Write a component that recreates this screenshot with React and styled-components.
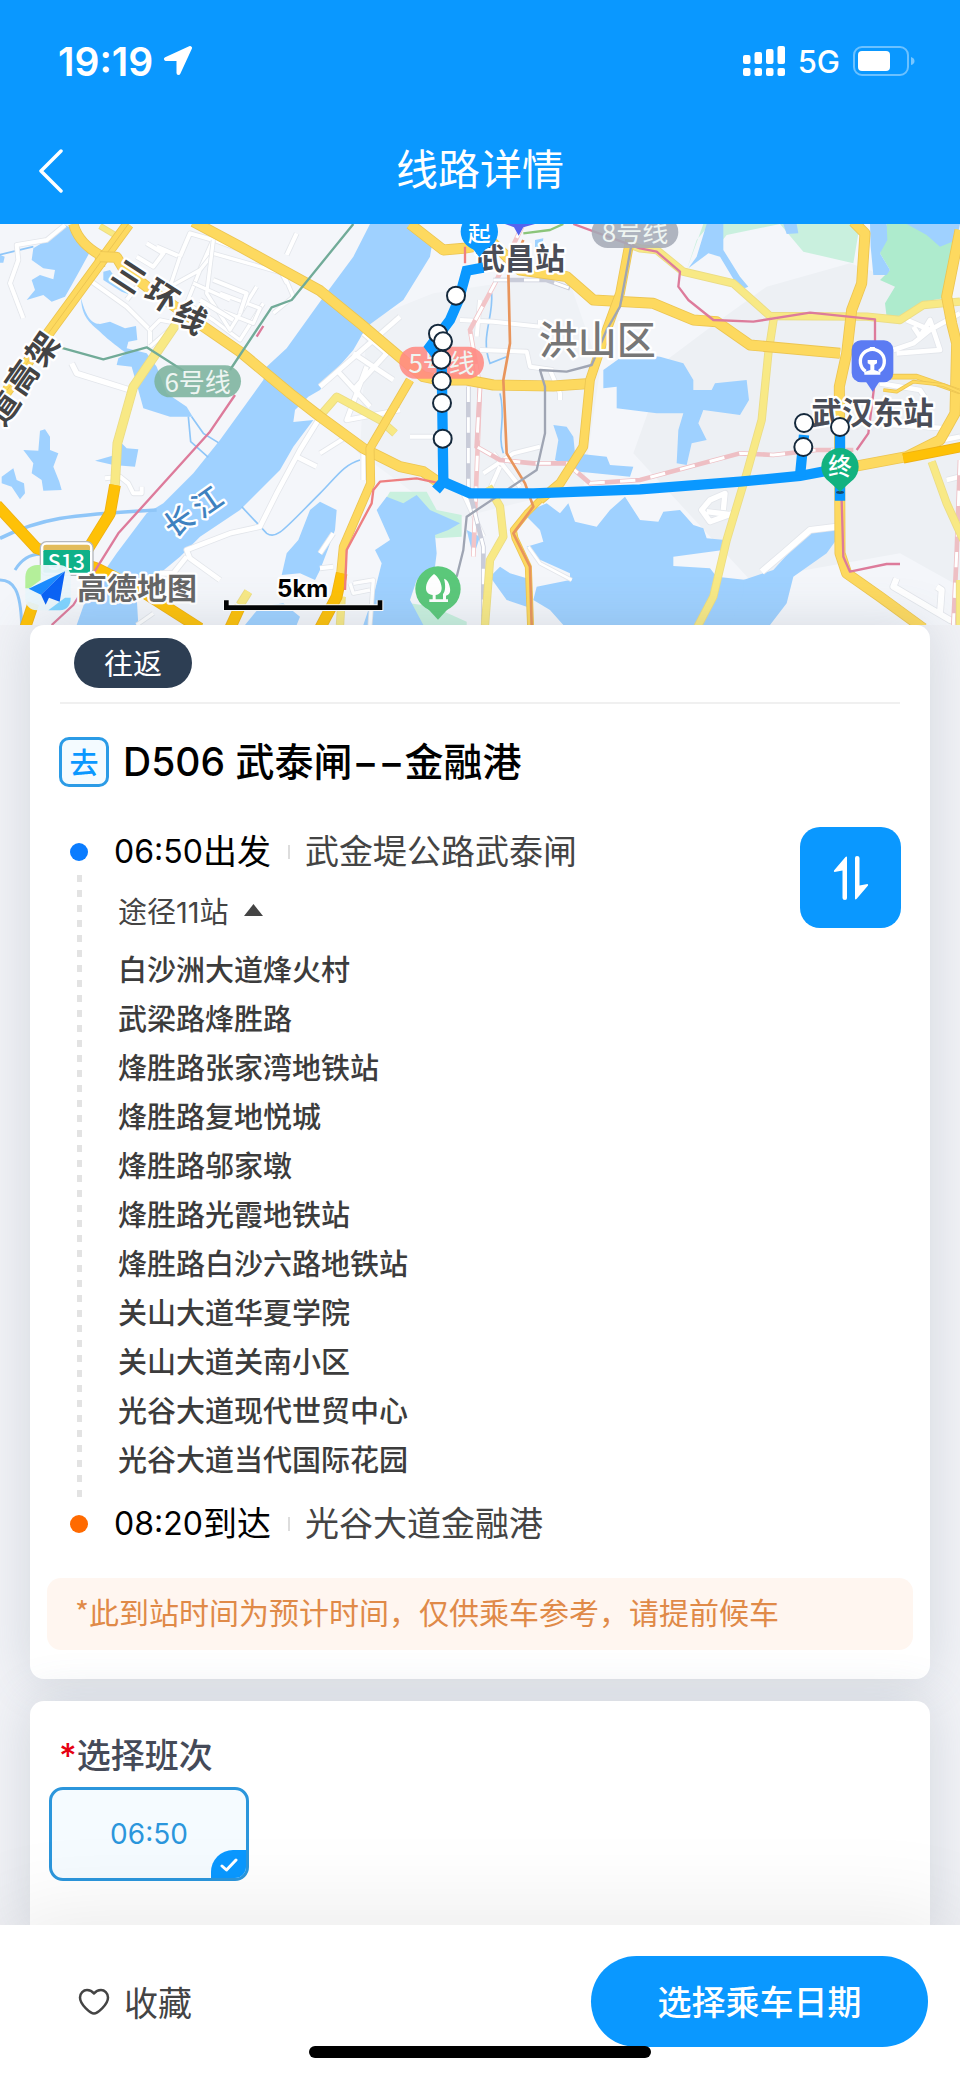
import React, { useState } from "react";
import styled, { createGlobalStyle } from "styled-components";

const BLUE = "#0a98ff";
const FONT = `Inter, "Noto Sans CJK SC", sans-serif`;
const CJK = `"Noto Sans CJK SC", sans-serif`;

const GlobalStyle = createGlobalStyle`
  * { box-sizing: border-box; }
  body { margin: 0; background: #f1f2f6; font-family: ${FONT}; color: #000; }
  button { font: inherit; border: 0; padding: 0; cursor: pointer; }
`;

const Page = styled.div`
  display: flex;
  flex-direction: column;
  min-height: 100vh;
  overflow-x: clip;
`;

const Header = styled.header`
  position: relative;
  z-index: 1;
  background: ${BLUE};
  color: #fff;
`;

const StatusBar = styled.div`
  display: flex;
  justify-content: space-between;
  align-items: center;
  height: 122px;
  padding: 0 44px 0 58px;
`;

const StatusGroup = styled.div`
  display: flex;
  align-items: center;
  gap: ${(p) => p.$gap}px;
`;

const Clock = styled.span`
  font-size: 39px;
  font-weight: 600;
`;

const Network = styled.span`
  font-size: 31px;
  font-weight: 500;
`;

const NavBar = styled.div`
  display: grid;
  grid-template-columns: 60px 1fr 60px;
  align-items: center;
  height: 102px;
  padding: 0 24px 4px;
`;

const BackButton = styled.button`
  display: flex;
  justify-content: center;
  width: 54px;
  background: none;
  color: inherit;
`;

const NavTitle = styled.h1`
  margin: 0;
  padding-bottom: 2px;
  text-align: center;
  font-size: 42px;
  line-height: 60px;
  font-weight: 400;
`;

const MapArea = styled.section`
  height: 401px;
  overflow: hidden;
  background: #f4f6fa;
  svg { display: block; width: 100%; height: 100%; }
`;

const Main = styled.main`
  flex: 1;
  display: flex;
  flex-direction: column;
  gap: 22px;
  padding: 0 30px;
`;

const Card = styled.section`
  padding: ${(p) => p.$pad};
  background: #fff;
  border-radius: ${(p) => (p.$open ? "14px 14px 0 0" : "14px")};
  box-shadow: 0 0 50px rgba(90, 110, 130, 0.2);
  flex: ${(p) => (p.$open ? 1 : "none")};
`;

const TagRow = styled.div`
  margin: 0 13px;
  padding: 0 14px 14px;
  border-bottom: 2px solid #f0f0f0;
`;

const Tag = styled.span`
  display: inline-flex;
  align-items: center;
  justify-content: center;
  width: 118px;
  height: 50px;
  padding-bottom: 2px;
  border-radius: 25px;
  background: #2d3e53;
  color: #fff;
  font-size: 29px;
  vertical-align: top;
`;

const LineHeading = styled.div`
  display: flex;
  align-items: center;
  gap: 14px;
  margin: 33px 12px 40px;
`;

const DirectionBadge = styled.span`
  display: flex;
  align-items: center;
  justify-content: center;
  width: 50px;
  height: 50px;
  padding-bottom: 2px;
  border: 3px solid #2b9be6;
  border-radius: 10px;
  background: #f4fbff;
  color: ${BLUE};
  font-size: 29px;
  font-weight: 500;
`;

const LineName = styled.h2`
  margin: 0;
  font-size: 39px;
  line-height: 50px;
  font-weight: 500;
`;

const Route = styled.div`
  display: flex;
  align-items: flex-start;
  padding: 0 12px 0 23px;
  margin-bottom: 29px;
`;

const Rail = styled.div`
  align-self: stretch;
  display: flex;
  flex-direction: column;
  align-items: center;
  gap: 14px;
  width: 18px;
  margin-right: 26px;
  padding: 16px 0;
`;

const Dot = styled.span`
  width: 18px;
  height: 18px;
  border-radius: 50%;
  background: ${(p) => p.$color};
`;

const Dashes = styled.span`
  flex: 1;
  width: 5px;
  background: repeating-linear-gradient(#e3e3e3 0 7px, transparent 7px 15px);
`;

const Stops = styled.div`
  flex: 1;
`;

const Terminal = styled.div`
  display: flex;
  align-items: center;
  height: 50px;
  font-size: 34px;
  line-height: 50px;
`;

const Time = styled.time`
  font-size: 32px;
`;

const Place = styled.span`
  display: flex;
  align-items: center;
  color: #444;
  &::before {
    content: "";
    width: 2px;
    height: 14px;
    margin: 0 15px 0 17px;
    background: #ddd;
  }
`;

const ViaToggle = styled.button`
  display: flex;
  align-items: center;
  gap: 15px;
  height: 69px;
  padding: 0 0 4px 4px;
  background: none;
  color: #444;
  font-size: 29px;
`;

const StopList = styled.ol`
  list-style: none;
  margin: 0 0 14px;
  padding: 0 0 0 4px;
`;

const Stop = styled.li`
  color: #3c3c3c;
  font-size: 29px;
  line-height: 49px;
  font-weight: 500;
`;

const SwapButton = styled.button`
  display: flex;
  align-items: center;
  justify-content: center;
  width: 101px;
  height: 101px;
  border-radius: 20px;
  background: ${BLUE};
`;

const Notice = styled.p`
  margin: 0;
  padding: 0 28px 6px;
  border-radius: 14px;
  background: #fff6f0;
  color: #e08a48;
  font-family: ${CJK};
  font-size: 30px;
  line-height: 66px;
`;

const SectionTitle = styled.h3`
  margin: 0 0 11px 10px;
  color: #454a58;
  font-size: 34px;
  line-height: 40px;
  font-weight: 500;
`;

const Required = styled.span`
  color: #e60012;
`;

const Option = styled.button`
  position: relative;
  width: 200px;
  height: 94px;
  border: 3px solid #2b96dc;
  border-radius: 14px;
  background: #f5fbff;
  color: #2b96dc;
  font-size: 28px;
  overflow: hidden;
`;

const Check = styled.span`
  position: absolute;
  right: -1px;
  bottom: -1px;
  display: flex;
  align-items: center;
  justify-content: center;
  width: 36px;
  height: 29px;
  border-radius: 22px 0 0 0;
  background: ${BLUE};
`;

const Footer = styled.footer`
  position: sticky;
  bottom: 0;
  display: flex;
  justify-content: space-between;
  align-items: flex-start;
  height: 153px;
  padding: 31px 32px 0 78px;
  background: #fff;
  box-shadow: 0 0 100px rgba(0, 0, 0, 0.1);
`;

const FavButton = styled.button`
  display: flex;
  align-items: center;
  gap: 14px;
  height: 91px;
  background: none;
  color: #444;
  font-size: 34px;
`;

const PrimaryButton = styled.button`
  width: 337px;
  height: 91px;
  padding-bottom: 3px;
  border-radius: 46px;
  background: ${BLUE};
  color: #fff;
  font-size: 34px;
  font-weight: 500;
`;

const HomeIndicator = styled.span`
  position: absolute;
  left: 50%;
  bottom: 20px;
  width: 342px;
  height: 12px;
  margin-left: -171px;
  border-radius: 6px;
  background: #000;
`;

/* ---------- map drawing ---------- */

const Road = ({ d, w = 28, fill = "#fdd95f", edge = "#ecc552" }) => (
  <g fill="none" strokeLinejoin="round">
    <path d={d} stroke={edge} strokeWidth={w + 5} />
    <path d={d} stroke={fill} strokeWidth={w} />
  </g>
);
const Pale = ({ d, w = 20 }) => <Road d={d} w={w} fill="#f8e985" edge="#ebdc85" />;
const Highway = ({ d, w = 30 }) => <Road d={d} w={w} fill="#fec107" edge="#eeb013" />;
const Street = ({ d, w = 12 }) => <Road d={d} w={w} fill="#fff" edge="#e3e6eb" />;
const Metro = ({ d, color, w = 7 }) => <path d={d} fill="none" stroke={color} strokeWidth={w} strokeLinejoin="round" />;
const Railway = ({ d, color, w = 14 }) => (
  <g fill="none">
    <path d={d} stroke={color} strokeWidth={w} />
    <path d={d} stroke="#fff" strokeWidth={w - 5} strokeDasharray="46 46" />
  </g>
);

const Label = styled.text`
  font-family: ${CJK};
  font-weight: ${(p) => p.$weight || 500};
  font-size: ${(p) => p.$size}px;
  fill: ${(p) => p.$fill || "#444"};
  stroke: ${(p) => p.$halo || "#fff"};
  stroke-width: ${(p) => (p.$halo === "none" ? 0 : 14)}px;
  stroke-linejoin: round;
  paint-order: stroke;
  text-anchor: middle;
  dominant-baseline: central;
`;

const WATER = [
  "M190 12L240 40L270 95L240 150L215 195L195 230L155 245L130 225L80 240L105 210L95 180L120 165L160 178L165 150L130 145L95 120L100 85L150 55Z",
  "M0 104L14 110L10 128H0Z",
  "M310 155L330 150L350 180L400 215L400 228L365 215L310 180Z",
  "M243 235C260 300 280 312 300 312L330 305L375 325L408 318L412 360L385 365L380 385L440 400L470 440L500 520L560 560L578 590L510 590L430 565L415 510L395 440L350 435L355 415L380 400C340 370 320 355 300 335C270 310 245 290 243 235Z",
  "M1110 12H1230L1295 80L1290 110L1210 240L1100 320L1060 390L990 470L960 510L925 530L885 570L880 606L940 600L880 680L840 750L720 870L600 950L540 1010L480 1060L410 1130L415 1215H230L260 1130L350 1000L440 880L490 850L580 760L660 660L790 480L800 440L860 385L960 245L1060 110Z",
  "M960 845L1010 870L1005 930L985 985L960 1050L945 1080L900 1060L845 1065L860 1000L895 960L930 870Z",
  "M735 1215L780 1160L850 1150L900 1190L890 1215Z",
  "M120 632L135 628L150 650L150 690L175 700L160 740L178 785L185 810L130 812L125 780L95 760L100 730L70 690L115 692Z",
  "M5 770L40 745L50 780L72 790L75 820L60 838L35 800L5 790Z",
  "M365 670L380 685L415 688L405 740L340 735L285 722L345 705Z",
  "M960 500L990 430L975 490Z",
  "M1130 870L1160 830L1210 850L1250 825L1290 870L1380 910L1345 930L1305 945L1310 1000L1305 1040L1250 1080L1230 1140L1270 1215H1090L1125 1110L1145 1030L1125 990L1170 960Z",
  "M1570 880L1640 850L1680 880L1705 850L1725 905L1790 920L1830 870L1875 830L1920 900L1975 905L1990 875L2040 870L2080 915L2110 925L2120 955L2175 960L2170 990L2020 1010L2020 1038L2130 1045L2150 1070L2240 1080L2250 1120L2230 1215H1690L1650 1170L1600 1140L1610 1100L1710 1080L1710 1060L1600 1010L1580 980L1630 965L1620 930Z",
  "M1500 1040L1530 1060L1580 1075L1580 1160L1520 1140L1470 1070Z",
  "M1400 930L1440 950L1420 1010Z",
  "M1810 450L1880 400L1980 410L2050 430L2080 480L2080 510L2135 510L2145 490L2240 480L2247 540L2220 585L2110 570L2095 610L2120 660L2075 670L2060 735L2030 730L2035 630L2050 580L1970 580L1850 565V500L1810 505Z",
  "M1660 615L1700 620L1720 650L1725 700L1820 710L1830 735L1900 740L1890 770L1740 755L1665 720L1675 660Z",
  "M2120 12H2170V90L2220 170L2245 200L2220 210L2160 110L2125 100L2065 145L2090 110Z",
  "M2530 930L2480 1000L2380 1070L2360 1150L2310 1215H2190L2230 1120L2230 1080L2320 1050L2410 950L2460 925Z",
  "M1605 60L1630 55L1625 90L1605 85Z",
];

const CIRCLES = [
  [1368, 227], [1314, 341], [1329, 364], [1324, 419], [1325, 483], [1326, 549], [1328, 656],
  [2412, 609], [2410, 681], [2520, 621],
];

const LinePill = ({ x, y, w, fill, text }) => (
  <g>
    <rect x={x} y={y} width={w} height="96" rx="48" fill={fill} opacity="0.88" />
    <Label x={x + w / 2} y={y + 44} $size={78} $fill="#eef5f2" $halo="none" $weight={400}>{text}</Label>
  </g>
);

const TransitMap = () => (
  <svg viewBox="0 12 2880 1203" preserveAspectRatio="xMidYMid slice" role="img" aria-label="线路地图">
    <rect y="0" width="2880" height="1220" fill="#f4f6fa" />
    <path d="M2000 420L2160 300L2300 200L2550 130L2880 250V1100L2700 1000L2250 1080L1900 700Z" fill="#edf0f4" />
    <path d="M1100 300L1300 220L1700 160L1800 450L1750 800L1350 900L1080 700Z" fill="#eff2f6" />
    {/* parks */}
    <g fill="#c9f0de">
      <path d="M2170 12H2340L2410 95L2560 130L2580 12Z M2340 12L2180 45L2160 70V12Z" />
      <path d="M2090 60L2130 12H2110L2060 150Z" />
      <path d="M1140 865L1170 815H1280L1310 870L1385 885V950L1310 955Z" />
      <path d="M1230 1150L1300 1160L1400 1205V1215H1260Z" />
    </g>
    <path d="M2660 12H2870V60L2830 235L2770 245L2720 285L2660 292L2655 250L2685 200L2640 180L2670 150L2640 100Z" fill="#aeebcd" />
    <g fill="#9fd1ff">
      {WATER.map((d) => <path key={d} d={d} />)}
      <path d="M2610 12H2660L2662 60L2640 100L2670 150L2660 165L2620 165L2612 80Z" />
      <path d="M2720 12H2880L2870 60L2820 80L2780 45Z" />
      <path d="M2350 12H2390L2395 40L2360 42Z" />
    </g>
    <g fill="none" stroke="#8fc6f8" strokeWidth="5">
      <path d="M0 955C120 895 200 885 470 870" strokeWidth="11" />
      <path d="M45 1050C70 1010 100 1003 120 1003M0 1080C40 1080 62 1110 65 1215" strokeWidth="9" />
      <path d="M725 860L800 940C830 960 850 930 960 820C1010 770 1030 735 1080 720" />
      <path d="M565 590L572 665L625 712M575 590L610 640L655 668M0 104L100 80" />
      <path d="M1475 220C1480 300 1440 350 1470 430L1520 410M1500 520C1520 600 1490 640 1510 700" />
    </g>
    {/* minor streets */}
    <Street d="M195 15L140 60L50 75L55 120L30 190L70 295" />
    <Street d="M215 430L230 460L390 510" w={16} />
    <Street d="M315 775L360 770L385 790L400 820L425 820L425 800" />
    <Street d="M275 185L380 260L450 330L450 380M380 240L420 190M470 80L540 110L570 40L640 60L600 150M440 70L490 100L460 140L410 110" />
    <Street d="M540 110L510 200L600 150L640 100L850 160L880 230L820 280M640 60L830 130L860 190M600 150L560 250L640 300L720 360L790 250" w={10} />
    <Street d="M660 220L780 265L760 310L670 275M640 60L620 220L690 330L770 200M580 190L690 240M450 380L530 310L480 300L450 330" w={10} />
    <Street d="M890 40L860 105M640 180L740 220L720 280M600 240L700 300" w={12} />
    <Street d="M955 600L900 690L830 820L780 920L690 940L560 990L570 1015L660 1080M560 1010L520 1060L480 1060M890 710L950 740" w={14} />
    <Street d="M1200 290L960 500M1090 340L1160 400L1060 510M1010 450L1110 560M1060 400L1180 480M1100 440L1040 600L1200 570" w={14} />
    <Street d="M960 700L1040 650L1090 700V780M1230 650H1330L1330 600M1000 1040L960 1045M1000 940L960 1000" w={12} />
    <Street d="M1060 1090L1120 1080L1110 1215M1050 1090L1060 1120L1110 1110M1040 1160H1110M460 1180L410 1215" w={10} />
    <Street d="M1380 300L1480 305L1620 320M1440 390L1580 395L1590 440L1660 450M1440 240L1430 350M1650 450L1680 520V540M1620 320V300" />
    <Street d="M1450 760L1540 700L1620 680M1480 700L1560 800M1500 740L1460 830M1390 820L1450 950" w={12} />
    <Street d="M1585 980L1620 1030L1715 1080" w={8} />
    <Street d="M2120 875L2200 885M2170 870L2175 820L2130 840L2105 870L2130 905L2200 880" w={16} />
    <Street d="M2510 920L2430 930L2350 1000L2285 1055" w={18} />
    <Street d="M2690 1075L2680 1100L2850 1200L2880 1210M2810 1100L2825 1110L2820 1180" w={18} />
    <Street d="M2680 390L2740 370L2790 330L2720 300M2690 400L2820 390L2790 300L2760 350L2740 320M2880 280L2790 330" w={14} />
    <Street d="M2600 610L2840 625M2640 490L2760 510L2780 540M2830 660L2880 650M2840 780L2880 770" w={14} />

    {/* railways */}
    <Railway d="M1570 12L1490 180L1410 330L1440 500L1420 1010" color="#f2c4c7" />
    <Railway d="M1405 500V800L1450 980V1215" color="#c9ccd9" />
    <Railway d="M1440 500L1430 680L1500 720L1600 730L1700 730L1770 790L1920 780L2220 700L2320 705L2450 690L2560 690" color="#eebfc4" />
    <Railway d="M2880 720L2870 1000L2860 1215" color="#eebfc4" />
    <Railway d="M1480 180L1640 180L1710 205" color="#c9ccd9" />

    {/* secondary roads */}
    <Pale d="M300 18L345 45" w={14} />
    <Pale d="M965 582L1010 530L1140 600L1185 640" />
    <Pale d="M1465 800L1500 860L1510 950L1470 1020L1455 1215" w={20} />
    <Pale d="M1880 70L1920 85L1970 90L2050 155L2200 190L2310 288L2600 290L2700 300L2770 255L2880 245" />
    <Pale d="M2322 290L2305 400L2285 600L2240 760L2180 960L2140 1130L2090 1225" />
    <Pale d="M2795 725L2840 850L2890 960" />
    <Pale d="M720 1155L745 1115" w={22} />
    <Pale d="M1020 1215L1025 1130" w={20} />
    <Pale d="M2880 1080V1215" w={20} />

    {/* main roads */}
    <Road d="M220 12C230 50 255 80 300 105L300 140" w={26} />
    <Road d="M385 12L145 340L-20 570" w={30} />
    <path d="M385 12L145 340L0 540" stroke="#ecc552" strokeWidth="3" fill="none" />
    <Road d="M580 5L720 80L960 212L1080 310L1210 420L1270 470L1320 480L1400 480L1480 495L1660 498L1780 490" />
    <Road d="M300 110L350 112L370 145L440 200L560 285L720 395L870 520L960 590L1090 685L1200 740L1270 755L1320 790" />
    <Road d="M1230 480L1110 685L1112 790L1030 980L1020 1080" w={22} />
    <Road d="M1230 12L1330 90L1390 85L1480 70L1560 150L1700 170L1780 240L1960 250L2080 300L2150 305L2250 375L2520 400" />
    <Road d="M1890 60L1860 220L1820 330L1770 480L1762 560L1750 680L1680 790L1620 840" w={24} />
    <Road d="M1620 840L1580 880L1540 930L1545 955L1585 1040L1592 1225" w={16} />
    <Road d="M2560 5L2595 40L2585 190L2555 270L2540 400L2518 500L2520 1000L2540 1060L2640 1130L2770 1225" />
    <Road d="M2880 30L2840 230L2855 310L2870 370L2865 580L2820 660L2720 710L2560 740" />
    <Road d="M2670 470L2750 470L2880 515" w={12} />
    <Road d="M2650 510L2690 515L2740 485L2830 495L2890 520" w={6} />
    <Pale d="M530 310L400 500L352 670L345 795" w={24} />
    <Highway d="M345 795L330 880L262 990" />
    <Highway d="M-10 855L110 985L290 1045L420 1110L600 1225" />
    <Highway d="M100 1150L75 1225" />
    <Highway d="M1025 1060L1010 1130L960 1225" />
    <Highway d="M720 1160L690 1225" />
    <Highway d="M2710 715L2890 680" w={26} />

    {/* metro lines */}
    <Metro d="M180 382L310 418L440 382L555 455M690 450L815 262L875 240L1060 12" color="#71ab98" />
    <Metro d="M790 318L770 350M705 525L630 635L355 940L280 1060L220 1155L155 1215" color="#dd7b9b" />
    <Metro d="M1395 80V130M1320 790L1250 775L1140 785L1120 810L1115 850L1040 990L1035 1110" color="#ee7f80" />
    <Metro d="M1570 60L1525 160L1530 370L1510 480L1520 700L1575 790L1600 860L1540 940L1590 1040L1595 1215" color="#e8955c" w={8} />
    <Metro d="M1895 70L1860 260L1820 330L1775 435L1700 455L1620 450L1635 500L1635 640L1610 750L1400 890L1390 990L1370 1070" color="#9fa5b3" />
    <Metro d="M1720 12L1920 85L1970 95L2040 155L2035 200L2065 240L2140 300L2260 305L2430 278L2625 298V480L2605 640L2570 690M2525 840L2530 1010L2550 1055L2660 1032H2700" color="#dd7b9b" />
    <Metro d="M1570 40L1650 30L1690 12" color="#8bc57a" />

    <LinePill x={463} y={436} w={260} fill="#7cb39d" text="6号线" />
    <LinePill x={1198} y={380} w={254} fill="#ff8a83" text="5号线" />
    <LinePill x={1775} y={-12} w={260} fill="#a5abb6" text="8号线" />

    {/* place names */}
    <Label $size={96} $weight={700} transform="translate(392 164) rotate(33)">三</Label>
    <Label $size={96} $weight={700} transform="translate(490 222) rotate(33)">环</Label>
    <Label $size={96} $weight={700} transform="translate(575 286) rotate(33)">线</Label>
    <Label $size={96} $weight={700} transform="translate(122 383) rotate(-55)">架</Label>
    <Label $size={96} $weight={700} transform="translate(60 468) rotate(-55)">高</Label>
    <Label $size={96} $weight={700} transform="translate(4 560) rotate(-55)">道</Label>
    <Label $size={88} $fill="#3f82c0" transform="translate(533 898) rotate(-35)">长</Label>
    <Label $size={88} $fill="#3f82c0" transform="translate(618 840) rotate(-35)">江</Label>
    <Label x="1560" y="107" $size={90} $fill="#4a4d57" $weight={700}>武昌站</Label>
    <Label x="1792" y="350" $size={117} $fill="#777">洪山区</Label>
    <Label x="2618" y="571" $size={92} $fill="#4a4d57" $weight={700}>武汉东站</Label>

    {/* bus route */}
    <g fill="none" stroke={BLUE} strokeWidth="31">
      <path d="M1450 143L1400 152L1376 240L1350 300L1290 380L1325 425L1330 785L1308 810" />
      <path d="M1330 785L1410 820L1600 820L1920 808L2220 785L2400 768L2520 745" />
      <path d="M2520 640V842M2400 768L2412 645" />
    </g>
    <ellipse cx="2520" cy="817" rx="12" ry="5" fill="#134a6d" />
    <g fill="#fff" stroke="#15293c" strokeWidth="6">
      {CIRCLES.map(([x, y]) => <circle key={`${x}-${y}`} cx={x} cy={y} r="27" />)}
    </g>
    <path d="M1410 75L1438 112L1466 75Z" fill={BLUE} />
    <circle cx="1438" cy="35" r="56" fill={BLUE} />
    <Label x="1438" y="33" $size={68} $fill="#fff" $halo="none">起</Label>
    <path d="M2488 785L2520 815L2552 785Z" fill="#12b27f" />
    <circle cx="2520" cy="740" r="56" fill="#12b27f" />
    <Label x="2520" y="735" $size={70} $fill="#fff" $halo="none">终</Label>

    {/* stations and points of interest */}
    <path d="M1515 12H1605L1570 22L1556 47L1542 22Z" fill="#5563ee" />
    <path d="M2598 485L2618 515L2638 485Z" fill="#5b7bf3" />
    <rect x="2555" y="361" width="125" height="126" rx="28" fill="#5b7bf3" />
    <path d="M2597 454A36 36 0 1 1 2637 454" fill="none" stroke="#fff" strokeWidth="10" />
    <path d="M2610 381H2624L2629 393H2605ZM2603 420H2631V430L2623 434V450L2641 456V464H2593V456L2611 450V434L2603 430Z" fill="#fff" />
    <path d="M1278 1160L1314 1199L1350 1160Z" fill="#5bc87a" />
    <circle cx="1314" cy="1107" r="68" fill="#5bc87a" />
    <g fill="#fff">
      <path d="M1302 1062C1285 1075 1278 1092 1278 1105C1278 1117 1286 1124 1298 1125V1138H1288V1146H1344V1138H1338V1127C1348 1125 1352 1117 1350 1105C1348 1089 1341 1078 1332 1076C1337 1095 1337 1112 1329 1122V1138H1307V1125C1319 1123 1325 1115 1325 1103C1324 1088 1316 1072 1302 1062Z" />
    </g>
    <g>
      <rect x="121" y="965" width="158" height="101" rx="18" fill="#fff" stroke="#b5b8bd" strokeWidth="4" />
      <path d="M130 990V980Q130 974 138 974H262Q270 974 270 980V990Z" fill="#e2bc5b" />
      <rect x="130" y="990" width="140" height="68" rx="4" fill="#0fb189" />
      <Label x="199" y="1022" $size={64} $fill="#fff" $halo="none">S13</Label>
    </g>
    <g>
      <rect x="76" y="1035" width="136" height="136" rx="34" fill="#e9f5fb" opacity="0.95" />
      <path d="M76 1105V1070Q78 1037 112 1035H122V1080L88 1105Z" fill="#b4ef9a" />
      <path d="M145 1171L195 1133H212Q212 1168 180 1171Z" fill="#7fd4ff" />
      <path d="M195 1054L86 1106L123 1124Z" fill="#1c8cff" />
      <path d="M195 1054L123 1124L137 1154L147 1133L179 1145Z" fill="#0a63f5" />
      <Label x="411" y="1099" $size={90} $fill="#666" $weight={700}>高德地图</Label>
    </g>
    <Label x="908" y="1106" $size={72} $fill="#000" $weight={700} style={{ fontFamily: "Inter" }}>5km</Label>
    <path d="M679 1141V1163H1140V1141" fill="none" stroke="#fff" strokeWidth="20" />
    <path d="M679 1141V1163H1140V1141" fill="none" stroke="#000" strokeWidth="14" />
  </svg>
);

/* ---------- icons ---------- */

const LocationIcon = () => (
  <svg width="30" height="30" viewBox="0 0 30 30" aria-hidden="true">
    <path d="M27 2L3 13H15.500V27Z" fill="#fff" stroke="#fff" strokeWidth="4" strokeLinejoin="round" />
  </svg>
);

const SignalIcon = () => (
  <svg width="42" height="31" viewBox="0 0 42 31" fill="#fff" aria-hidden="true">
    {[[0, 9], [11.500, 6], [23, 3], [34.500, 0]].map(([x, y]) => (
      <g key={x}>
        <rect x={x} y={y} width="7.500" height={18 - y} rx="2" />
        <rect x={x} y="22" width="7.500" height="8" rx="2" />
      </g>
    ))}
  </svg>
);

const BatteryIcon = () => (
  <svg width="63" height="31" viewBox="0 0 63 31" aria-hidden="true">
    <rect x="1" y="1" width="54" height="28" rx="8" fill="none" stroke="#fff" strokeOpacity="0.4" strokeWidth="2" />
    <rect x="5" y="5" width="32" height="20" rx="4" fill="#fff" />
    <path d="M58 11Q61.500 12 61.500 15Q61.500 18 58 19Z" fill="#fff" fillOpacity="0.45" />
  </svg>
);

const BackIcon = () => (
  <svg width="26" height="44" viewBox="0 0 26 44" aria-hidden="true">
    <path d="M23 2L3 22L23 42" fill="none" stroke="#fff" strokeWidth="3.500" strokeLinecap="round" strokeLinejoin="round" />
  </svg>
);

const SwapIcon = () => (
  <svg width="36" height="46" viewBox="0 0 36 46" fill="#fff" aria-hidden="true">
    <path d="M14 2.500V43Q14 45 12 45Q9.500 45 9.500 43V15.500L1.500 17Q0.500 16.500 1 15.500L12.500 2Q14 1 14 2.500Z" />
    <path d="M22 43.500V3Q22 1 24 1Q26.500 1 26.500 3V30.500L34.500 29Q35.500 29.500 35 30.500L23.500 44Q22 45 22 43.500Z" />
  </svg>
);

const TriangleIcon = ({ flipped }) => (
  <svg width="19" height="12" viewBox="0 0 19 12" aria-hidden="true">
    <path d={flipped ? "M0 0H19L9.500 12Z" : "M9.500 0L19 12H0Z"} fill="#444" />
  </svg>
);

const CheckIcon = () => (
  <svg width="18" height="14" viewBox="0 0 18 14" aria-hidden="true">
    <path d="M2 8L6.500 12L16 2" fill="none" stroke="#fff" strokeWidth="3" strokeLinecap="round" strokeLinejoin="round" />
  </svg>
);

const HeartIcon = ({ filled }) => (
  <svg width="32" height="28" viewBox="0 0 32 28" aria-hidden="true">
    <path
      d="M16 25.500C13 25.500 2 17 2 9.500C2 5 5.500 2 9 2C12 2 14 3 16 5.500C18 3 20 2 23 2C26.500 2 30 5 30 9.500C30 17 19 25.500 16 25.500Z"
      fill={filled ? "#444" : "none"}
      stroke="#444"
      strokeWidth="2.500"
      strokeLinejoin="round"
    />
  </svg>
);

const STOPS = [
  "白沙洲大道烽火村",
  "武梁路烽胜路",
  "烽胜路张家湾地铁站",
  "烽胜路复地悦城",
  "烽胜路邬家墩",
  "烽胜路光霞地铁站",
  "烽胜路白沙六路地铁站",
  "关山大道华夏学院",
  "关山大道关南小区",
  "光谷大道现代世贸中心",
  "光谷大道当代国际花园",
];

export default function App() {
  const [open, setOpen] = useState(true);
  const [fav, setFav] = useState(false);

  return (
    <Page>
      <GlobalStyle />
      <Header>
        <StatusBar>
          <StatusGroup $gap={10}>
            <Clock>19:19</Clock>
            <LocationIcon />
          </StatusGroup>
          <StatusGroup $gap={13}>
            <SignalIcon />
            <Network>5G</Network>
            <BatteryIcon />
          </StatusGroup>
        </StatusBar>
        <NavBar>
          <BackButton type="button" aria-label="返回"><BackIcon /></BackButton>
          <NavTitle>线路详情</NavTitle>
        </NavBar>
      </Header>

      <MapArea><TransitMap /></MapArea>

      <Main>
        <Card $pad="13px 17px 29px">
          <TagRow><Tag>往返</Tag></TagRow>
          <LineHeading>
            <DirectionBadge>去</DirectionBadge>
            <LineName>D506 武泰闸−−金融港</LineName>
          </LineHeading>
          <Route>
            <Rail>
              <Dot $color="#0a7cff" />
              <Dashes />
              <Dot $color="#ff6a00" />
            </Rail>
            <Stops>
              <Terminal><Time>06:50</Time>出发<Place>武金堤公路武泰闸</Place></Terminal>
              <ViaToggle type="button" aria-expanded={open} onClick={() => setOpen(!open)}>
                途径11站
                <TriangleIcon flipped={!open} />
              </ViaToggle>
              {open && (
                <StopList>
                  {STOPS.map((name) => <Stop key={name}>{name}</Stop>)}
                </StopList>
              )}
              <Terminal><Time>08:20</Time>到达<Place>光谷大道金融港</Place></Terminal>
            </Stops>
            <SwapButton type="button" aria-label="切换往返方向"><SwapIcon /></SwapButton>
          </Route>
          <Notice>*此到站时间为预计时间，仅供乘车参考，请提前候车</Notice>
        </Card>

        <Card $open $pad="35px 19px 44px">
          <SectionTitle><Required>*</Required>选择班次</SectionTitle>
          <Option type="button" aria-pressed="true">
            06:50
            <Check><CheckIcon /></Check>
          </Option>
        </Card>
      </Main>

      <Footer>
        <FavButton type="button" aria-pressed={fav} onClick={() => setFav(!fav)}>
          <HeartIcon filled={fav} />
          收藏
        </FavButton>
        <PrimaryButton type="button">选择乘车日期</PrimaryButton>
        <HomeIndicator />
      </Footer>
    </Page>
  );
}
